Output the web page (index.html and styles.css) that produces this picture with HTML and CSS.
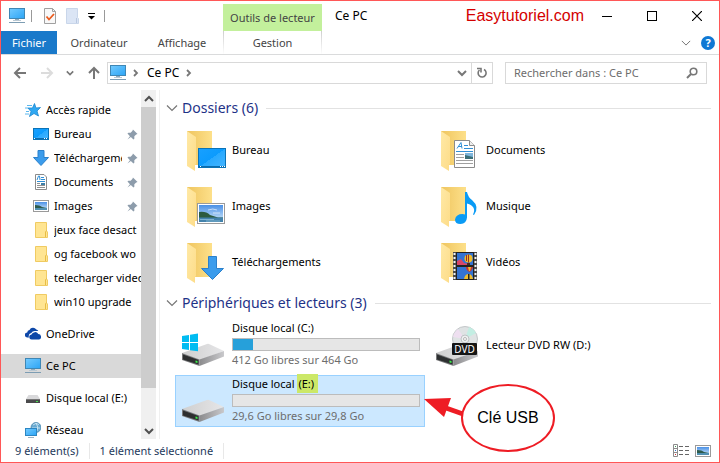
FILE: index.html
```
<!DOCTYPE html>
<html lang="fr">
    <head>
        <meta charset="utf-8">
        <title>Ce PC</title>
        <link rel="stylesheet" href="styles.css">
    </head>

    <body>
        <!-- Shared icons -->
        <svg class="defs" aria-hidden="true">
            <defs>
                <linearGradient id="screenFill" x1="0" y1="0" x2="1" y2="1">
                    <stop offset="0" stop-color="#74cbff"/>
                    <stop offset="1" stop-color="#2ba4f5"/>
                </linearGradient>
                <linearGradient id="deskFill" x1="0" y1="0" x2="1" y2="1">
                    <stop offset="0" stop-color="#18a0ff"/>
                    <stop offset="0.5" stop-color="#0c9bfd"/>
                    <stop offset="0.5" stop-color="#28a9ff"/>
                    <stop offset="1" stop-color="#45b5ff"/>
                </linearGradient>
                <linearGradient id="backFill" x1="0" y1="0" x2="1" y2="0">
                    <stop offset="0" stop-color="#efc55f"/>
                    <stop offset="1" stop-color="#fde08a"/>
                </linearGradient>
                <linearGradient id="flapFill" x1="0" y1="0" x2="1" y2="1">
                    <stop offset="0" stop-color="#ffe9a6"/>
                    <stop offset="1" stop-color="#fddc88"/>
                </linearGradient>
                <linearGradient id="driveTop" x1="0" y1="0" x2="1" y2="0">
                    <stop offset="0" stop-color="#cfcfcf"/>
                    <stop offset="1" stop-color="#e6e6e8"/>
                </linearGradient>
                <linearGradient id="driveSide" x1="0" y1="0" x2="1" y2="0">
                    <stop offset="0" stop-color="#8b8b8d"/>
                    <stop offset="1" stop-color="#c9c9cc"/>
                </linearGradient>
                <linearGradient id="skyFill" x1="0" y1="0" x2="0" y2="1">
                    <stop offset="0" stop-color="#4a90e6"/>
                    <stop offset="1" stop-color="#d6ecfb"/>
                </linearGradient>
            </defs>

            <symbol id="pc" viewBox="0 0 16 16">
                <rect x="0.5" y="0.5" width="15" height="10" fill="url(#screenFill)" stroke="#3f87b5"/>
                <path d="M6 11h4v1h-4z" fill="#8fa9bb"/>
                <path d="M4 12h8v1h-8z" fill="#b9c8d3"/>
                <path d="M0 14.5h16" stroke="#7d9db3"/>
            </symbol>
            <symbol id="desktop" viewBox="0 0 16 16">
                <rect x="0.5" y="2.5" width="15" height="11" fill="url(#deskFill)" stroke="#0a73b7"/>
                <path d="M1 12.5h14" stroke="#0b6cae"/>
                <path d="M1 12.5h1M11 12.5h1M13 12.5h1" stroke="#fff"/>
            </symbol>
            <symbol id="download" viewBox="0 0 16 16">
                <path d="M5 0.5h6v7h4.5l-7.5 8-7.5-8h4.5z" fill="#3b9cec" stroke="#2b80cb"/>
            </symbol>
            <symbol id="document" viewBox="0 0 16 16">
                <path d="M2.5 0.5h8.5l2.500 2.500v12.500h-11z" fill="#fff" stroke="#8b8b8b"/>
                <path d="M4 6l1.500-4h1l0.500 4M8 3.500h3M8 5.500h4M4 7.500h8" fill="none" stroke="#2f8fd6"/>
                <path d="M4 9.500h3M4 11.500h8M4 13.500h8" stroke="#909090"/>
                <path d="M8 9h4v2h-4z" fill="#3d7fa8"/>
            </symbol>
            <symbol id="picture" viewBox="0 0 16 16">
                <rect x="0.5" y="2.5" width="15" height="11" fill="#fff" stroke="#9a9a9a"/>
                <rect x="2" y="4" width="12" height="8" fill="url(#skyFill)"/>
                <path d="M2 7q5 0 7 2l5 1v0.500h-12z" fill="#2d5b4d"/>
                <path d="M2 10h12v2h-12z" fill="#4f8fb0"/>
            </symbol>
            <symbol id="folder" viewBox="0 0 16 16">
                <path d="M2.500 0.500h11v8.500l1 1v5.500h-12z" fill="#ffe592" stroke="#f0cb62"/>
                <path d="M12.500 15v-5l1-1.500" fill="none" stroke="#e8bd45"/>
            </symbol>
            <symbol id="star" viewBox="0 0 16 16">
                <path d="M9.500 1.500l1.500 4.500 4.500-0.500-3.500 3.500 1.500 5-4.500-2.500-4.500 3 1.500-5-3-3.500 4.500 0z" fill="#2fa8f2" stroke="#1c86cf" stroke-width="0.8"/>
                <path d="M2 3.500h5M0 6h3M1 9.500h3M0 12h4" stroke="#5bb8ee"/>
            </symbol>
            <symbol id="cloud" viewBox="0 0 16 16">
                <path d="M4 11.500h-1.500a2.500 2.500 0 0 1-0.300-5a3 3 0 0 1 2.300-2.500a4 4 0 0 1 6.800-0.500a4 4 0 0 1 2 1.500l-3 0a4 4 0 0 0-4 2a3.500 3.500 0 0 0-2.300 4.500z" fill="#0d47a8"/>
                <path d="M7 13.500a2.500 2.500 0 0 1-0.500-5a3.800 3.800 0 0 1 6.800-0.500a2.800 2.800 0 0 1 0.700 5.500z" fill="#0d47a8"/>
            </symbol>
            <symbol id="driveSmall" viewBox="0 0 16 16">
                <path d="M3.500 5h9l2.500 4h-14z" fill="#d9d9db"/>
                <path d="M1 9h14v4h-14z" fill="#4a4a4c"/>
                <path d="M1 9.500h14" stroke="#777"/>
                <path d="M11 11h2v1h-2z" fill="#46e04c"/>
            </symbol>
            <symbol id="network" viewBox="0 0 16 16">
                <circle cx="11" cy="5.500" r="5" fill="#69a9d0" stroke="#4d88ad" stroke-width="0.800"/>
                <path d="M8 3q3-3 6-0.500M11 1q3 4 1 8M7 6h8" fill="none" stroke="#d9edf8" stroke-width="0.800"/>
                <rect x="0.500" y="6.500" width="11" height="7" fill="url(#screenFill)" stroke="#2c86c2"/>
                <path d="M3 15.500h6" stroke="#9db3c2"/>
            </symbol>
            <symbol id="pin" viewBox="0 0 12 12">
                <path d="M6.500 0.500l5 5-1.500 0.500-2 2v2.500l-1 1-2.800-2.700-3.700 2.700 2.700-3.700-2.700-2.800 1-1h2.500l2-2z" fill="#8d9cab"/>
            </symbol>
            <symbol id="chevronDown" viewBox="0 0 10 10">
                <path d="M1 3l4 4 4-4" fill="none" stroke="currentColor" stroke-width="2"/>
            </symbol>
            <symbol id="chevronThin" viewBox="0 0 12 12">
                <path d="M1 3.500l5 5 5-5" fill="none" stroke="currentColor" stroke-width="1.200"/>
            </symbol>
            <symbol id="chevronRight" viewBox="0 0 8 8">
                <path d="M2 1l3 3-3 3" fill="none" stroke="#777" stroke-width="1.800"/>
            </symbol>

            <symbol id="bigFolder" viewBox="0 0 48 48">
                <path d="M7 5h25v34h-25z" fill="url(#backFill)"/>
                <path d="M7 5l9 6v27l-1 1v6l-8-5z" fill="url(#flapFill)"/>
            </symbol>
            <symbol id="bigDrive" viewBox="0 0 48 48">
                <path d="M2 32l25-9q1-0.500 2 0l15 7-24 9z" fill="url(#driveTop)"/>
                <path d="M19.500 38.500l24.500-8.500v5.500l-24.500 9.500z" fill="url(#driveSide)"/>
                <path d="M2 32l17.500 6.500v6.500l-17.500-6z" fill="#77787a"/>
                <path d="M3 33.500l15.500 5.500v4.500l-15.500-5z" fill="#2d2f30"/>
                <path d="M15.500 39.500l2 0.500v2l-2-0.500z" fill="#3bf049"/>
            </symbol>
        </svg>

        <div class="window">
            <header>
                <div class="titlebar">
                    <div class="quick">
                        <svg class="icon"><use href="#pc"/></svg>
                        <span class="sep"></span>
                        <button aria-label="Propriétés">
                            <svg class="icon" viewBox="0 0 16 16">
                                <path d="M2.500 0.500h8l3 3v12h-11z" fill="#f8f8f8" stroke="#a0a0a0"/>
                                <path d="M10.500 0.500v3h3" fill="none" stroke="#a0a0a0"/>
                                <path d="M4.500 8.500l2.500 3 5-5.500" fill="none" stroke="#ea5a1c" stroke-width="1.800"/>
                            </svg>
                        </button>
                        <button aria-label="Nouveau dossier">
                            <svg class="icon" viewBox="0 0 16 16">
                                <path d="M2.500 0.500h11v9l1 1v5h-12z" fill="#dbe5f5" stroke="#c9d6ea"/>
                                <path d="M12.500 15v-5" stroke="#b9c8e0"/>
                            </svg>
                        </button>
                        <button class="more" aria-label="Personnaliser">
                            <svg width="8" height="8" viewBox="0 0 8 8"><path d="M0 1.500h7" stroke="#000"/><path d="M0 4h7l-3.500 3.500z"/></svg>
                        </button>
                        <span class="sep"></span>
                    </div>
                    <div class="tools">Outils de lecteur</div>
                    <h1>Ce PC</h1>
                    <span class="site">Easytutoriel.com</span>
                    <div class="controls">
                        <button aria-label="Réduire"><svg width="10" height="10"><path d="M0 5.500h10" stroke="#000"/></svg></button>
                        <button aria-label="Agrandir"><svg width="10" height="10"><rect x="0.500" y="0.500" width="9" height="9" fill="none" stroke="#000"/></svg></button>
                        <button aria-label="Fermer"><svg width="10" height="10"><path d="M0 0l10 10M10 0l-10 10" stroke="#000" stroke-width="1.200"/></svg></button>
                    </div>
                </div>
                <nav class="tabs">
                    <a class="tab file" href="#fichier">Fichier</a>
                    <a class="tab" href="#ordinateur">Ordinateur</a>
                    <a class="tab" href="#affichage">Affichage</a>
                    <a class="tab manage" href="#gestion">Gestion</a>
                    <div class="help">
                        <button class="expand" aria-label="Développer le ruban"><svg width="10" height="10"><use href="#chevronThin"/></svg></button>
                        <button class="question" aria-label="Aide">?</button>
                    </div>
                </nav>
            </header>

            <div class="toolbar">
                <div class="arrows">
                    <button aria-label="Précédent"><svg width="14" height="14" viewBox="0 0 14 14"><path d="M13 7h-11M7 2l-5 5 5 5" fill="none" stroke="#777" stroke-width="2"/></svg></button>
                    <button aria-label="Suivant"><svg width="14" height="14" viewBox="0 0 14 14"><path d="M1 7h11M7 2l5 5-5 5" fill="none" stroke="#dcdcdc" stroke-width="2"/></svg></button>
                    <button aria-label="Emplacements récents"><svg width="8" height="8"><use href="#chevronDown"/></svg></button>
                    <button aria-label="Dossier parent"><svg width="14" height="14" viewBox="0 0 14 14"><path d="M7 13v-11M2 7l5-5 5 5" fill="none" stroke="#777" stroke-width="2"/></svg></button>
                </div>
                <div class="address">
                    <svg class="icon"><use href="#pc"/></svg>
                    <svg class="crumb"><use href="#chevronRight"/></svg>
                    <a href="#cepc">Ce PC</a>
                    <svg class="crumb"><use href="#chevronRight"/></svg>
                    <button class="history" aria-label="Historique"><svg width="10" height="10"><use href="#chevronDown"/></svg></button>
                    <button class="refresh" aria-label="Actualiser">
                        <svg width="12" height="12" viewBox="0 0 12 12"><path d="M8 2.500a4 4 0 1 1-4.500 0.500" fill="none" stroke="#777" stroke-width="1.600"/><path d="M1 1.500h4v4" fill="none" stroke="#777" stroke-width="1.600"/></svg>
                    </button>
                </div>
                <div class="search">
                    <input type="text" aria-label="Rechercher" placeholder="Rechercher dans : Ce PC">
                    <svg width="12" height="12" viewBox="0 0 12 12"><circle cx="7.500" cy="4.500" r="3.300" fill="none" stroke="#777" stroke-width="1.600"/><path d="M5 7l-4 4" stroke="#777" stroke-width="2"/></svg>
                </div>
            </div>

            <main>
                <aside>
                    <ul class="tree">
                        <li><svg class="icon"><use href="#star"/></svg><a href="#rapide">Accès rapide</a></li>
                        <li class="sub"><svg class="icon"><use href="#desktop"/></svg><a href="#bureau">Bureau</a><svg class="pin"><use href="#pin"/></svg></li>
                        <li class="sub"><svg class="icon"><use href="#download"/></svg><a href="#telechargements">Téléchargements</a><svg class="pin"><use href="#pin"/></svg></li>
                        <li class="sub"><svg class="icon"><use href="#document"/></svg><a href="#documents">Documents</a><svg class="pin"><use href="#pin"/></svg></li>
                        <li class="sub"><svg class="icon"><use href="#picture"/></svg><a href="#images">Images</a><svg class="pin"><use href="#pin"/></svg></li>
                        <li class="sub"><svg class="icon"><use href="#folder"/></svg><a href="#jeux">jeux face desact</a></li>
                        <li class="sub"><svg class="icon"><use href="#folder"/></svg><a href="#og">og facebook wo</a></li>
                        <li class="sub"><svg class="icon"><use href="#folder"/></svg><a href="#video">telecharger video</a></li>
                        <li class="sub"><svg class="icon"><use href="#folder"/></svg><a href="#win10">win10 upgrade</a></li>
                        <li class="root"><svg class="icon"><use href="#cloud"/></svg><a href="#onedrive">OneDrive</a></li>
                        <li class="root current"><svg class="icon"><use href="#pc"/></svg><a href="#cepc">Ce PC</a></li>
                        <li class="root"><svg class="icon"><use href="#driveSmall"/></svg><a href="#e">Disque local (E:)</a></li>
                        <li class="root"><svg class="icon"><use href="#network"/></svg><a href="#reseau">Réseau</a></li>
                    </ul>
                    <div class="scrollbar">
                        <button aria-label="Haut"><svg class="up" width="10" height="10"><use href="#chevronDown"/></svg></button>
                        <div class="thumb"></div>
                        <button aria-label="Bas"><svg width="10" height="10"><use href="#chevronDown"/></svg></button>
                    </div>
                </aside>

                <div class="content">
                    <section>
                        <h2><svg width="12" height="12"><use href="#chevronThin"/></svg>Dossiers (6)</h2>
                        <div class="items">
                            <div class="item">
                                <svg class="big" viewBox="0 0 48 48">
                                    <use href="#bigFolder"/>
                                    <rect x="18.500" y="22.500" width="27" height="19" fill="url(#deskFill)" stroke="#0a73b7"/>
                                    <path d="M19 40.500h26" stroke="#0b6cae"/>
                                    <path d="M20 40.500h1M40 40.500h1M42 40.500h1M44 40.500h1" stroke="#fff"/>
                                </svg>
                                <span>Bureau</span>
                            </div>
                            <div class="item">
                                <svg class="big" viewBox="0 0 48 48">
                                    <use href="#bigFolder"/>
                                    <path d="M20.500 14.500h15l5 5v22h-20z" fill="#fff" stroke="#8b8b8b"/>
                                    <path d="M35.500 14.500v5h5" fill="#eee" stroke="#8b8b8b"/>
                                    <path d="M23 22.500l4-6 1 6M24 20.500h4M30 19.500h4M30 22.500h9M22 25.500h17" fill="none" stroke="#2f8fd6"/>
                                    <path d="M22 28.500h8M22 31.500h8M22 34.500h17M22 37.500h17" stroke="#a0a0a0"/>
                                    <path d="M31 27h8v6h-8z" fill="#7fb6dc"/>
                                    <path d="M31 29l8 2v2h-8z" fill="#3a6f78"/>
                                </svg>
                                <span>Documents</span>
                            </div>
                            <div class="item">
                                <svg class="big" viewBox="0 0 48 48">
                                    <use href="#bigFolder"/>
                                    <rect x="17.500" y="21.500" width="27" height="20" fill="#fff" stroke="#9a9a9a"/>
                                    <rect x="19" y="23" width="24" height="17" fill="url(#skyFill)"/>
                                    <path d="M19 30q7-1 11 3l8 2.500h5v0.500h-24z" fill="#2d5b3d"/>
                                    <path d="M28 28q5-2 9 0M33 31h7" fill="none" stroke="#fff" opacity="0.600"/>
                                    <path d="M19 35.500h24v4.500h-24z" fill="#4382ab"/>
                                    <path d="M20 37.500h14M26 39h14" stroke="#7fb2cf"/>
                                </svg>
                                <span>Images</span>
                            </div>
                            <div class="item">
                                <svg class="big" viewBox="0 0 48 48">
                                    <use href="#bigFolder"/>
                                    <path d="M31 10h2q1 5 5 8q8 7 2 15l-1-0.500q4-8-6-11v14q-0.500 6-6.500 6.500q-5.500 0-5.500-4.500q1-5.500 7.500-5.500q1.500 0 2.500 0.500z" fill="#0a9bf5"/>
                                </svg>
                                <span>Musique</span>
                            </div>
                            <div class="item">
                                <svg class="big" viewBox="0 0 48 48">
                                    <use href="#bigFolder"/>
                                    <path d="M28.500 18.500h8v12h7l-11 11-11-11h7z" fill="#3b9cec" stroke="#2b80cb"/>
                                </svg>
                                <span>Téléchargements</span>
                            </div>
                            <div class="item">
                                <svg class="big" viewBox="0 0 48 48">
                                    <use href="#bigFolder"/>
                                    <path d="M19 14h24v28h-24z" fill="#4a4a4a"/>
                                    <path d="M20.500 15v27M41.500 15v27" stroke="#f4f4f4" stroke-width="2" stroke-dasharray="2 2"/>
                                    <path d="M22 14h18v28h-18z" fill="#222"/>
                                    <path d="M23 15h16v12h-16zM23 29h16v12h-16z" fill="#3473d2"/>
                                    <path d="M23 23l4-2 3 4 5 1v1h-12z" fill="#d84667"/>
                                    <circle cx="34.500" cy="20.500" r="4" fill="#f0bd2c"/>
                                    <path d="M34.500 16.500v8M32.500 17v6" stroke="#9c2b22"/>
                                    <path d="M33 25h3v2h-3z" fill="#4b2820"/>
                                    <path d="M32 29h7q-1 4-3.500 5q-3-1-3.500-5z" fill="#c63632"/>
                                    <path d="M34 29h3l-1 4h-1z" fill="#f0bd2c"/>
                                    <path d="M30 41q1-5 4.500-5t4.500 5z" fill="#f0bd2c"/>
                                    <path d="M34 36h1.500v5h-1.500z" fill="#222"/>
                                </svg>
                                <span>Vidéos</span>
                            </div>
                        </div>
                    </section>

                    <section>
                        <h2><svg width="12" height="12"><use href="#chevronThin"/></svg>Périphériques et lecteurs (3)</h2>
                        <div class="items">
                            <div class="item">
                                <svg class="big" viewBox="0 0 48 48">
                                    <use href="#bigDrive"/>
                                    <path d="M2 15l7-1v7h-7zM10 13.800l8-1.300v8.500h-8zM2 22h7v7l-7-1zM10 22h8v8.300l-8-1.100z" fill="#00bcf2"/>
                                </svg>
                                <div class="drive">
                                    <span>Disque local (C:)</span>
                                    <div class="bar"><div class="used" style="width: 11%"></div></div>
                                    <span class="free">412 Go libres sur 464 Go</span>
                                </div>
                            </div>
                            <div class="item">
                                <svg class="big" viewBox="0 0 48 48">
                                    <use href="#bigDrive"/>
                                    <circle cx="31" cy="18" r="12.500" fill="#dfe3e4" stroke="#c3c7c9"/>
                                    <path d="M31 18l4-12q5 2 7 6z" fill="#c3eee3"/>
                                    <path d="M31 18l-12-2q1-5 5-8z" fill="#eedff0"/>
                                    <circle cx="31" cy="18" r="4" fill="#edf0f0" stroke="#bfc3c5"/>
                                    <circle cx="31" cy="18" r="1.500" fill="#fff" stroke="#b5b5b5"/>
                                    <rect x="18" y="22" width="25" height="12" rx="1" fill="#151515"/>
                                    <text class="dvd" x="30.500" y="32" text-anchor="middle">DVD</text>
                                </svg>
                                <span>Lecteur DVD RW (D:)</span>
                            </div>
                            <div class="item selected">
                                <svg class="big"><use href="#bigDrive"/></svg>
                                <div class="drive">
                                    <span>Disque local <mark>(E:)</mark></span>
                                    <div class="bar"></div>
                                    <span class="free">29,6 Go libres sur 29,8 Go</span>
                                </div>
                                <!-- callout drawn over the list -->
                                <div class="callout">
                                    <svg width="32" height="24" viewBox="0 0 32 24">
                                        <path d="M22 10l17 6" stroke="#ee1c24" stroke-width="5"/>
                                        <path d="M0 1l27-1-7 19z" fill="#ee1c24"/>
                                    </svg>
                                    <span class="bubble">Clé USB</span>
                                </div>
                            </div>
                        </div>
                    </section>
                </div>
            </main>

            <footer>
                <span>9 élément(s)</span>
                <span>1 élément sélectionné</span>
                <div class="views">
                    <button aria-label="Détails">
                        <svg width="16" height="14" viewBox="0 0 16 14">
                            <path d="M0.500 0.500h4v12h-4zM0.500 4.500h4M0.500 8.500h4" fill="none" stroke="#8c8c8c"/>
                            <path d="M6 2.500h4M12 2.500h4M6 6.500h4M12 6.500h4M6 10.500h4M12 10.500h4" stroke="#666"/>
                            <path d="M2 2.500h1" stroke="#3a9a55"/><path d="M2 6.500h1" stroke="#2f6fd0"/><path d="M2 10.500h1" stroke="#d03030"/>
                        </svg>
                    </button>
                    <button aria-label="Grandes icônes"><svg class="icon"><use href="#picture"/></svg></button>
                </div>
            </footer>
        </div>
    </body>
</html>
```

FILE: styles.css
```
* {
    margin: 0;
    padding: 0;
    box-sizing: border-box;
}

body {
    font-family: "Noto Sans", "Open Sans", sans-serif;
    font-size: 11px;
    line-height: 16px;
    color: #000;
    background-color: #fff;
}

a {
    color: inherit;
    text-decoration: none;
}

button {
    display: flex;
    align-items: center;
    justify-content: center;
    border: none;
    background: none;
    color: #777;
    font-family: inherit;
}

svg {
    display: block;
    flex-shrink: 0;
}

.defs {
    position: absolute;
    width: 0;
    height: 0;
}

.icon {
    width: 16px;
    height: 16px;
}

.window {
    display: flex;
    flex-direction: column;
    height: 100vh;
    border: 1px solid #ff5757;
}

/* title bar */
.titlebar {
    display: flex;
    height: 30px;
}

.quick {
    display: flex;
    align-items: center;
    gap: 6px;
    width: 222px;
    padding-left: 8px;
}

.quick .sep {
    width: 1px;
    height: 12px;
    margin-right: 4px;
    background-color: #999;
}

.quick .more {
    margin: 0 2px;
}

.tools {
    width: 99px;
    margin-top: 3px;
    background-color: #c3f09c;
    color: #444;
    line-height: 27px;
    text-align: center;
}

h1 {
    flex: 1;
    padding-left: 13px;
    font-size: 12px;
    font-weight: normal;
    line-height: 30px;
}

.site {
    color: #d40000;
    font-family: "Liberation Sans", sans-serif;
    font-size: 16px;
    line-height: 30px;
}

.controls {
    display: flex;
}

.controls button {
    width: 45px;
    height: 29px;
}

/* ribbon tabs */
.tabs {
    display: flex;
    height: 24px;
    border-bottom: 1px solid #dadbdc;
    color: #444;
    line-height: 24px;
    text-align: center;
}

.tab {
    width: 82px;
}

.tab.file {
    width: 56px;
    background-color: #1979ca;
    color: #fff;
}

.tab:nth-child(2) {
    width: 84px;
}

.tab.manage {
    width: 99px;
    border: solid;
    border-width: 0 1px;
    border-image: linear-gradient(#ccc, #fff) 1;
}

.help {
    display: flex;
    align-items: center;
    gap: 10px;
    margin-left: auto;
    padding-right: 4px;
}

.question {
    width: 14px;
    height: 14px;
    border-radius: 50%;
    background-color: #0f78d4;
    color: #fff;
    font-size: 11px;
    font-weight: bold;
}

/* address bar */
.toolbar {
    display: flex;
    align-items: center;
    gap: 12px;
    height: 35px;
    padding-right: 12px;
}

.arrows {
    display: flex;
    align-items: center;
    justify-content: space-between;
    width: 100px;
    padding-left: 12px;
}

.address,
.search {
    display: flex;
    align-items: center;
    height: 22px;
    border: 1px solid #d9d9d9;
}

.address {
    flex: 1;
    margin-left: -6px;
    padding-left: 2px;
    gap: 6px;
}

.crumb {
    width: 8px;
    height: 8px;
}

.address a {
    padding-left: 1px;
    font-size: 12px;
}

.history {
    margin-left: auto;
    margin-right: -2px;
}

.refresh {
    width: 21px;
    height: 20px;
    border-left: 1px solid #d9d9d9;
}

.search {
    width: 202px;
    padding: 0 8px;
}

.search input {
    flex: 1;
    min-width: 0;
    border: none;
    outline: none;
    background: none;
    font-family: inherit;
    font-size: 11px;
}

.search input::placeholder {
    color: #6d6d6d;
}

main {
    display: flex;
    flex: 1;
    min-height: 0;
}

/* navigation pane */
aside {
    display: flex;
    width: 159px;
    border-right: 1px solid #f0f0f0;
}

.tree {
    width: 140px;
    padding-top: 8px;
    overflow: hidden;
    list-style: none;
}

.tree li {
    display: flex;
    align-items: center;
    gap: 5px;
    height: 24px;
    padding-left: 24px;
}

.tree .sub {
    padding-left: 32px;
}

.tree .root {
    margin-top: 8px;
}

.tree .current {
    background-color: #d9d9d9;
}

.tree a {
    flex: 1;
    overflow: hidden;
    white-space: nowrap;
}

.pin {
    width: 11px;
    height: 11px;
    margin-right: 3px;
}

.scrollbar {
    display: flex;
    flex-direction: column;
    justify-content: space-between;
    width: 15px;
    background-color: #f0f0f0;
}

.scrollbar button {
    height: 17px;
    color: #505050;
}

.scrollbar .up {
    transform: rotate(180deg);
}

.thumb {
    flex: 1;
    margin-bottom: 34px;
    background-color: #cdcdcd;
}

/* file list */
.content {
    flex: 1;
    padding: 8px 8px 0 6px;
}

h2 {
    display: flex;
    align-items: center;
    gap: 4px;
    height: 20px;
    color: #1e3287;
    font-size: 14px;
    font-weight: normal;
}

h2 svg {
    color: #777;
}

h2::after {
    content: "";
    flex: 1;
    height: 1px;
    margin-left: 4px;
    background-color: #e2e2e2;
}

.items {
    display: grid;
    grid-template-columns: 250px 250px;
    gap: 4px;
    padding: 6px 0 5px 9px;
}

.item {
    position: relative;
    display: flex;
    align-items: center;
    gap: 4px;
    height: 52px;
    padding-left: 4px;
    border: 1px solid transparent;
}

.big {
    width: 48px;
    height: 48px;
}

.selected {
    border-color: #99d1ff;
    background-color: #cce8ff;
}

.drive {
    flex: 1;
    margin-right: 4px;
    padding-bottom: 2px;
}

.drive span {
    display: block;
}

.bar {
    height: 13px;
    margin: 2px 0 1px;
    border: 1px solid #bcbcbc;
    background-color: #e6e6e6;
}

.used {
    height: 100%;
    background-color: #26a0da;
}

.free {
    color: #6d6d6d;
}

mark {
    padding: 2px 4px 2px 1px;
    background-color: #cce868;
}

.dvd {
    fill: #fff;
    font-size: 10px;
}

.callout {
    position: absolute;
    top: 8px;
    left: 248px;
    display: flex;
}

.callout svg {
    margin-top: 14px;
    margin-right: 5px;
    overflow: visible;
}

.bubble {
    width: 94px;
    height: 68px;
    border: 2px solid #ee1c24;
    border-radius: 50%;
    background-color: #fff;
    font-family: "Liberation Sans", sans-serif;
    font-size: 16px;
    line-height: 64px;
    text-align: center;
}

/* status bar */
footer {
    display: flex;
    align-items: center;
    height: 23px;
    padding: 0 8px 0 4px;
    color: #1e395b;
}

footer span {
    padding: 0 10px;
    border-right: 1px solid #e8e8e8;
}

.views {
    display: flex;
    gap: 6px;
    margin-left: auto;
}
```
